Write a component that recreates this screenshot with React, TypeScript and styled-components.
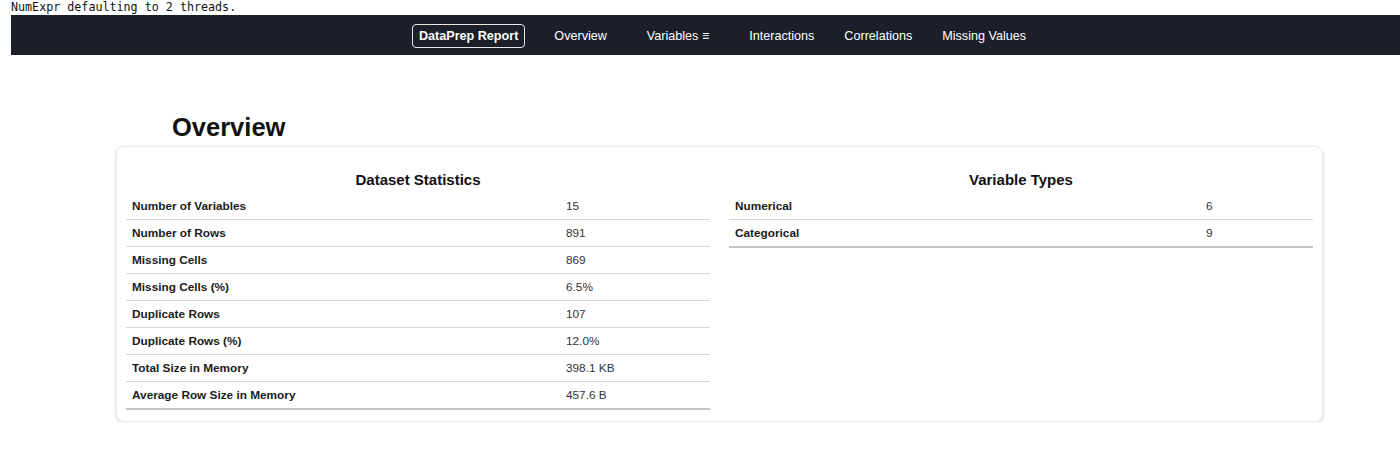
import React from "react";
import styled, { createGlobalStyle } from "styled-components";

const Global = createGlobalStyle`
  html, body { margin: 0; padding: 0; background: #fff; }
  body { font-family: "Liberation Sans", Arial, sans-serif; color: #212529; }
`;

const Page = styled.div`
  width: 1400px;
  overflow: hidden;
`;

const Log = styled.pre`
  margin: 0;
  padding-left: 11px;
  height: 15px;
  font-family: "DejaVu Sans Mono", "Liberation Mono", monospace;
  font-size: 11.7px;
  line-height: 14px;
  color: #111;
`;

const Nav = styled.nav`
  box-sizing: border-box;
  margin-left: 11px;
  height: 40px;
  background: #1b1f28;
  display: flex;
  align-items: center;
  justify-content: center;
  padding: 1px 0 0 27px;
  font-size: 12.6px;
  color: #fff;
`;

const Brand = styled.a`
  box-sizing: border-box;
  display: inline-flex;
  align-items: center;
  height: 24px;
  padding: 0 6px;
  border: 1px solid #e8e8e8;
  border-radius: 4px;
  font-weight: bold;
  color: #fff;
  margin-right: 29px;
`;

const NavItem = styled.a<{ $gap: number }>`
  color: #fff;
  margin-right: ${(p) => p.$gap}px;
  &:last-child { margin-right: 0; }
`;

const Main = styled.main`
  margin-left: 116px;
  width: 1207px;
`;

const Heading = styled.h2`
  margin: 57px 0 4px 56px;
  font-size: 25.5px;
  line-height: 30px;
  font-weight: bold;
  color: #111;
`;

const Card = styled.section`
  box-sizing: border-box;
  height: 276px;
  border: 1px solid #ebebeb;
  border-radius: 8px;
  box-shadow: 0 1px 3px rgba(0, 0, 0, 0.22);
  padding: 10px 9px 10px 9px;
  display: grid;
  grid-template-columns: 584px 584px;
  column-gap: 19px;
  align-items: start;
`;

const Panel = styled.div`
  display: flex;
  flex-direction: column;
`;

const PanelTitle = styled.h3`
  margin: 11px 0 1px 0;
  font-size: 15px;
  line-height: 24px;
  font-weight: bold;
  text-align: center;
  color: #111;
`;

const Row = styled.div<{ $labelWidth: number; $last?: boolean }>`
  display: grid;
  grid-template-columns: ${(p) => p.$labelWidth}px 1fr;
  height: 26px;
  align-items: center;
  border-bottom: ${(p) => (p.$last ? "2px solid #c4c4c4" : "1px solid #d6d6d6")};
  font-size: 11.8px;
  line-height: 16px;
`;

const Label = styled.span`
  padding-left: 6px;
  font-weight: bold;
  color: #1a1a1a;
`;

const Value = styled.span`
  padding-left: 6px;
  color: #333;
`;

const stats: [string, string][] = [
  ["Number of Variables", "15"],
  ["Number of Rows", "891"],
  ["Missing Cells", "869"],
  ["Missing Cells (%)", "6.5%"],
  ["Duplicate Rows", "107"],
  ["Duplicate Rows (%)", "12.0%"],
  ["Total Size in Memory", "398.1 KB"],
  ["Average Row Size in Memory", "457.6 B"],
];

const types: [string, string][] = [
  ["Numerical", "6"],
  ["Categorical", "9"],
];

const navItems: [string, number][] = [
  ["Overview", 40],
  ["Variables \u2261", 40],
  ["Interactions", 30],
  ["Correlations", 30],
  ["Missing Values", 0],
];

export default function App() {
  return (
    <Page>
      <Global />
      <Log>NumExpr defaulting to 2 threads.</Log>
      <Nav>
        <Brand>DataPrep Report</Brand>
        {navItems.map(([t, g]) => (
          <NavItem key={t} $gap={g}>
            {t}
          </NavItem>
        ))}
      </Nav>
      <Main>
        <Heading>Overview</Heading>
        <Card>
          <Panel>
            <PanelTitle>Dataset Statistics</PanelTitle>
            {stats.map(([l, v], i) => (
              <Row key={l} $labelWidth={434} $last={i === stats.length - 1}>
                <Label>{l}</Label>
                <Value>{v}</Value>
              </Row>
            ))}
          </Panel>
          <Panel>
            <PanelTitle>Variable Types</PanelTitle>
            {types.map(([l, v], i) => (
              <Row key={l} $labelWidth={471} $last={i === types.length - 1}>
                <Label>{l}</Label>
                <Value>{v}</Value>
              </Row>
            ))}
          </Panel>
        </Card>
      </Main>
    </Page>
  );
}
